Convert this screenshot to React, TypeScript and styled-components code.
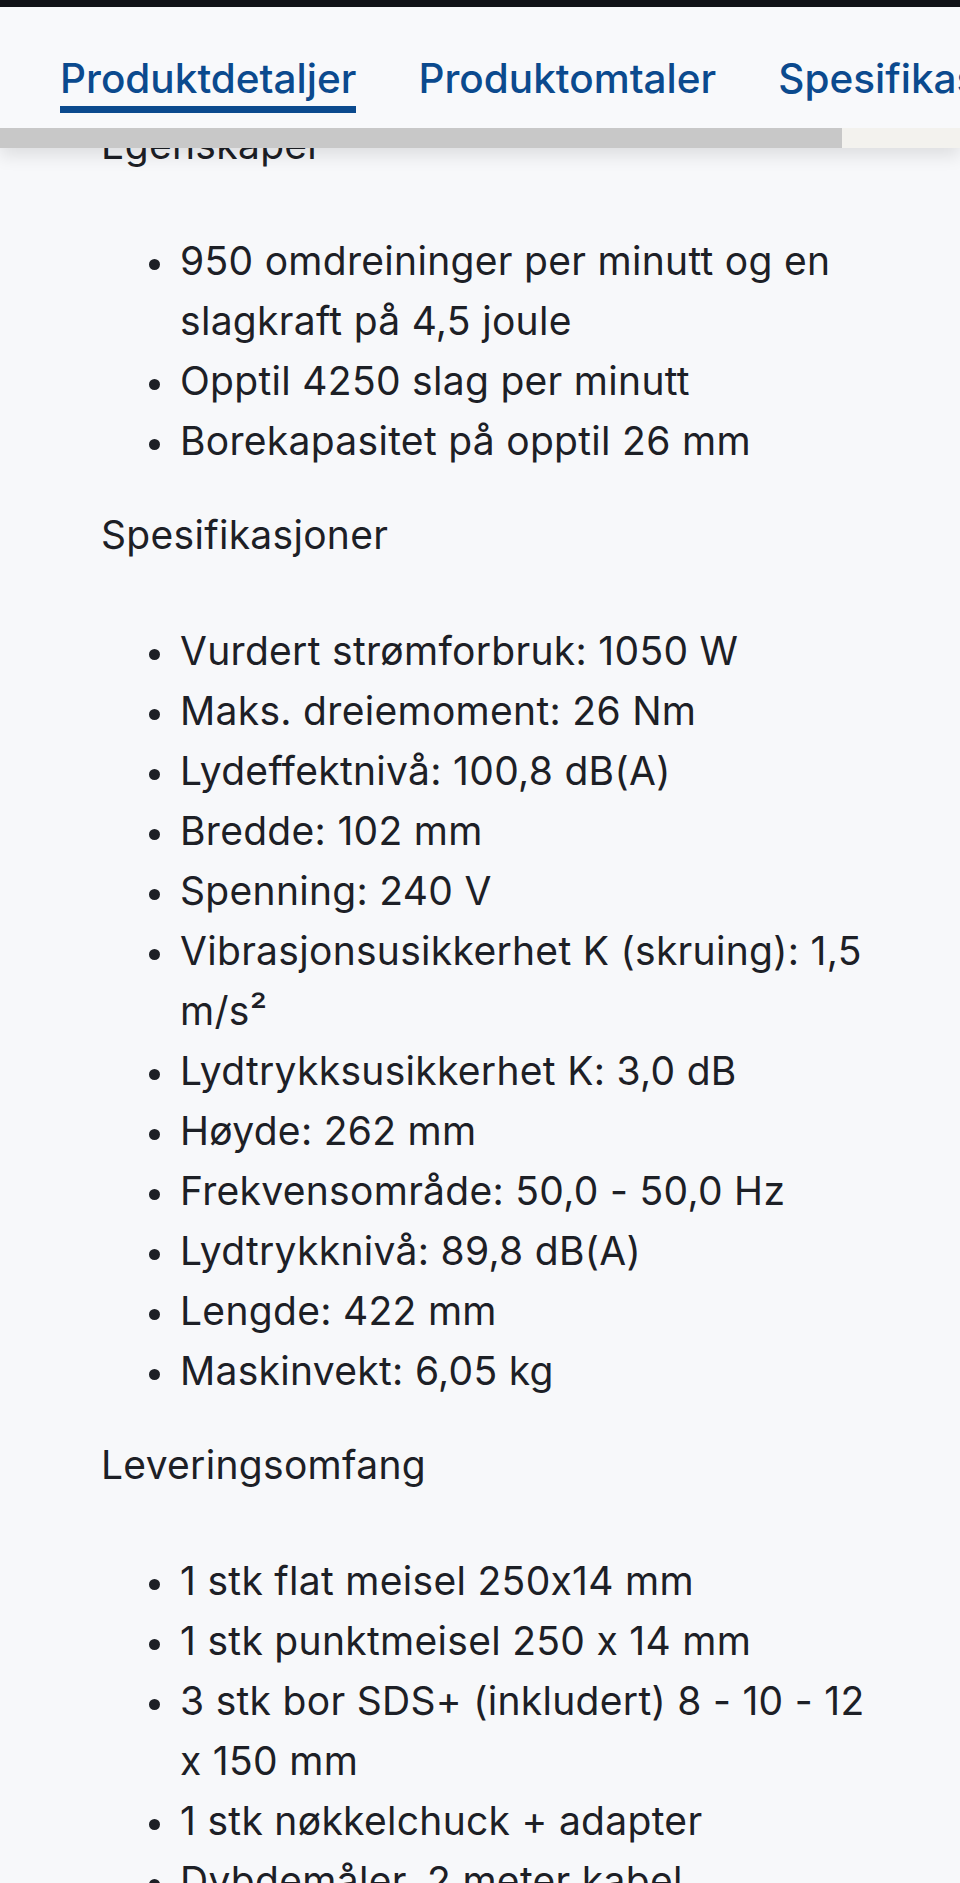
import styled, { createGlobalStyle } from "styled-components";

const GlobalStyle = createGlobalStyle`
  html, body {
    margin: 0;
    padding: 0;
    background: #f7f8fa;
  }

  body {
    font-family: "Inter", "Liberation Sans", sans-serif;
    font-feature-settings: "calt" 0;
    color: #1d2026;
  }
`;

const Header = styled.header`
  position: fixed;
  top: 0;
  left: 0;
  right: 0;
  z-index: 10;
  box-shadow: 0 8px 16px rgba(0, 0, 0, 0.1);
`;

const StatusStrip = styled.div`
  height: 7px;
  background: #111318;
`;

const TabBar = styled.nav`
  height: 121px;
  display: flex;
  align-items: flex-end;
  gap: 62px;
  padding-left: 60px;
  background: #f8f9fb;
  overflow: hidden;
  white-space: nowrap;
`;

const Tab = styled.div<{ $active?: boolean }>`
  flex-shrink: 0;
  font-size: 40.5px;
  font-weight: 500;
  line-height: 48px;
  color: #0b4a8e;
  padding-bottom: 3px;
  margin-bottom: 15px;
  border-bottom: 7px solid ${p => (p.$active ? "#0b4a8e" : "transparent")};
`;

const ScrollTrack = styled.div`
  height: 20px;
  display: flex;
  background: #f3f2ee;
`;

const ScrollThumb = styled.div`
  width: 842px;
  background: #c8c8c8;
`;

const Content = styled.main`
  padding: 115px 76px 0 101px;
  font-size: 39px;
  letter-spacing: 0.3px;
  line-height: 60px;
`;

const Heading = styled.p`
  margin: 0;
`;

const List = styled.ul`
  list-style: none;
  margin: 56px 0 34px;
  padding-left: 79px;
`;

const Item = styled.li`
  &::before {
    content: "";
    display: inline-block;
    width: 11px;
    height: 11px;
    border-radius: 50%;
    background: #1d2026;
    margin-left: -31px;
    margin-right: 20px;
    vertical-align: middle;
  }
`;

const sections = [
  {
    title: "Egenskaper",
    items: [
      "950 omdreininger per minutt og en slagkraft på 4,5 joule",
      "Opptil 4250 slag per minutt",
      "Borekapasitet på opptil 26 mm",
    ],
  },
  {
    title: "Spesifikasjoner",
    items: [
      "Vurdert strømforbruk: 1050 W",
      "Maks. dreiemoment: 26 Nm",
      "Lydeffektnivå: 100,8 dB(A)",
      "Bredde: 102 mm",
      "Spenning: 240 V",
      "Vibrasjonsusikkerhet K (skruing): 1,5 m/s²",
      "Lydtrykksusikkerhet K: 3,0 dB",
      "Høyde: 262 mm",
      "Frekvensområde: 50,0 - 50,0 Hz",
      "Lydtrykknivå: 89,8 dB(A)",
      "Lengde: 422 mm",
      "Maskinvekt: 6,05 kg",
    ],
  },
  {
    title: "Leveringsomfang",
    items: [
      "1 stk flat meisel 250x14 mm",
      "1 stk punktmeisel 250 x 14 mm",
      "3 stk bor SDS+ (inkludert) 8 - 10 - 12 x 150 mm",
      "1 stk nøkkelchuck + adapter",
      "Dybdemåler, 2 meter kabel",
    ],
  },
];

export default function App() {
  return (
    <>
      <GlobalStyle />
      <Header>
        <StatusStrip />
        <TabBar>
          <Tab $active>Produktdetaljer</Tab>
          <Tab>Produktomtaler</Tab>
          <Tab>Spesifikasjoner</Tab>
        </TabBar>
        <ScrollTrack>
          <ScrollThumb />
        </ScrollTrack>
      </Header>
      <Content>
        {sections.map(section => (
          <section key={section.title}>
            <Heading>{section.title}</Heading>
            <List>
              {section.items.map(item => (
                <Item key={item}>{item}</Item>
              ))}
            </List>
          </section>
        ))}
      </Content>
    </>
  );
}
